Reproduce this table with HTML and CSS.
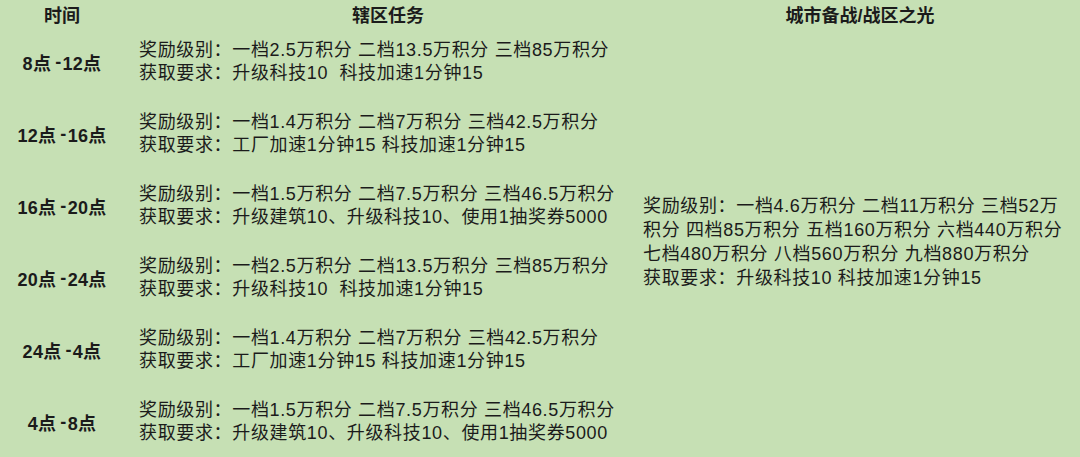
FILE: index.html
```html
<!DOCTYPE html>
<html lang="zh-CN">
<head>
<meta charset="utf-8">
<title>辖区任务</title>
<link rel="stylesheet" href="styles.css">
</head>
<body>
<div class="sheet">
  <div class="hd hd-time">时间</div>
  <div class="hd hd-task">辖区任务</div>
  <div class="hd hd-city">城市备战/战区之光</div>

  <div class="time r1">8点<span class="dash">-</span>12点</div>
  <div class="task r1"><span>奖励级别：一档2.5万积分 二档13.5万积分 三档85万积分</span><span>获取要求：升级科技10&nbsp; 科技加速1分钟15</span></div>

  <div class="time r2">12点<span class="dash">-</span>16点</div>
  <div class="task r2"><span>奖励级别：一档1.4万积分 二档7万积分 三档42.5万积分</span><span>获取要求：工厂加速1分钟15 科技加速1分钟15</span></div>

  <div class="time r3">16点<span class="dash">-</span>20点</div>
  <div class="task r3"><span>奖励级别：一档1.5万积分 二档7.5万积分 三档46.5万积分</span><span>获取要求：升级建筑10、升级科技10、使用1抽奖券5000</span></div>

  <div class="time r4">20点<span class="dash">-</span>24点</div>
  <div class="task r4"><span>奖励级别：一档2.5万积分 二档13.5万积分 三档85万积分</span><span>获取要求：升级科技10&nbsp; 科技加速1分钟15</span></div>

  <div class="time r5">24点<span class="dash">-</span>4点</div>
  <div class="task r5"><span>奖励级别：一档1.4万积分 二档7万积分 三档42.5万积分</span><span>获取要求：工厂加速1分钟15 科技加速1分钟15</span></div>

  <div class="time r6">4点<span class="dash">-</span>8点</div>
  <div class="task r6"><span>奖励级别：一档1.5万积分 二档7.5万积分 三档46.5万积分</span><span>获取要求：升级建筑10、升级科技10、使用1抽奖券5000</span></div>

  <div class="city">
    <span>奖励级别：一档4.6万积分 二档11万积分 三档52万</span>
    <span>积分 四档85万积分 五档160万积分 六档440万积分</span>
    <span>七档480万积分 八档560万积分 九档880万积分</span>
    <span>获取要求：升级科技10 科技加速1分钟15</span>
  </div>
</div>
</body>
</html>
```

FILE: styles.css
```css
html, body {
  margin: 0;
  padding: 0;
  background: #c6e0b4;
}

body {
  width: 1080px;
  height: 457px;
  overflow: hidden;
  font-family: "Liberation Sans", "Noto Sans CJK SC", sans-serif;
  color: #1b1b1b;
}

.sheet {
  display: grid;
  grid-template-columns: 124px 516px 1fr;
  grid-template-rows: 26px repeat(6, 72px);
  background: #c6e0b4;
}

.hd {
  font-size: 18px;
  font-weight: bold;
  line-height: 20px;
  padding-top: 6px;
  text-align: center;
  grid-row: 1;
}

.hd-time { grid-column: 1; }
.hd-task { grid-column: 2; padding-left: 12px; }
.hd-city { grid-column: 3; }

.time {
  grid-column: 1;
  display: flex;
  align-items: center;
  justify-content: center;
  font-size: 18px;
  font-weight: bold;
  letter-spacing: 0.3px;
}

.dash {
  margin: 0 1px 0 4px;
}

.task {
  grid-column: 2;
  display: flex;
  flex-direction: column;
  justify-content: center;
  padding-left: 15px;
  font-size: 18px;
  line-height: 23px;
  letter-spacing: 0.65px;
  white-space: nowrap;
}

.r1 { grid-row: 2; }
.r2 { grid-row: 3; }
.r3 { grid-row: 4; }
.r4 { grid-row: 5; }
.r5 { grid-row: 6; }
.r6 { grid-row: 7; }

.city {
  grid-column: 3;
  grid-row: 2 / 8;
  display: flex;
  flex-direction: column;
  justify-content: center;
  padding-left: 3px;
  font-size: 18px;
  line-height: 24px;
  letter-spacing: 0.65px;
  white-space: nowrap;
}
```
